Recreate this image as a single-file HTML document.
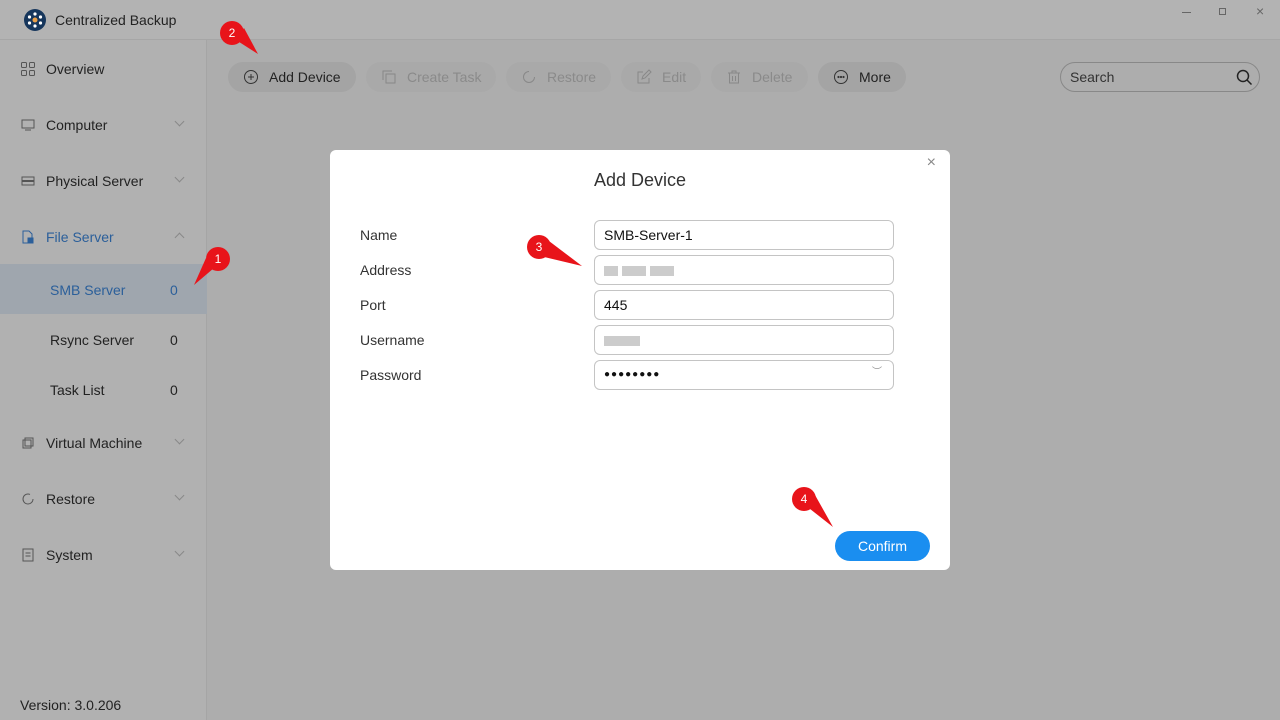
<!DOCTYPE html>
<html><head><meta charset="utf-8"><style>
*{box-sizing:border-box;margin:0;padding:0}
body{width:1280px;height:720px;overflow:hidden;font-family:"Liberation Sans",sans-serif;background:#adadad;position:relative;color:#222}
.top{position:absolute;left:0;top:0;width:1280px;height:40px;background:#b3b3b3;border-bottom:1px solid #a6a6a6}
.side{position:absolute;left:0;top:40px;width:207px;height:680px;background:#b1b1b1;border-right:1px solid #a5a5a5}
.nav{position:absolute;left:20px;font-size:14px;color:#222;display:flex;align-items:center}
.nav svg{margin-right:10px}
.chev{position:absolute;left:176px;width:7px;height:7px;border-right:1px solid #888;border-bottom:1px solid #888;transform:rotate(45deg)}
.sub{position:absolute;left:50px;font-size:14px;color:#222}
.cnt{position:absolute;left:170px;font-size:14px}
.btn{position:absolute;top:62px;height:30px;border-radius:15px;background:#a4a4a4;display:flex;align-items:center;padding-left:15px;font-size:14px;color:#222}
.btn.dis{background:#a9a9a9;color:#8a8a8a}
.btn svg{margin-right:10px}
.modal{position:absolute;left:330px;top:150px;width:620px;height:420px;background:#fff;border-radius:6px}
.lbl{position:absolute;left:30px;font-size:14px;color:#333}
.inp{position:absolute;left:264px;width:300px;height:30px;border:1px solid #c4c4c4;border-radius:6px;font-size:14px;padding-left:9px;line-height:28px;color:#111}
.blur{display:inline-block;height:10px;background:#ccc;vertical-align:middle;margin-right:4px}
.badge{position:absolute;width:24px;height:24px;border-radius:50%;background:#e8141a;color:#fff;font-size:12px;text-align:center;line-height:24px}
</style></head><body>
<div class="top">
<svg style="position:absolute;left:24px;top:9px" width="22" height="22" viewBox="0 0 22 22"><circle cx="11" cy="11" r="11" fill="#16365c"/><circle cx="11" cy="11" r="2.5" fill="#e9a04a"/><g fill="#fff"><circle cx="11" cy="5" r="1.6"/><circle cx="11" cy="17" r="1.6"/><circle cx="5.5" cy="8" r="1.6"/><circle cx="16.5" cy="8" r="1.6"/><circle cx="5.5" cy="14" r="1.6"/><circle cx="16.5" cy="14" r="1.6"/></g></svg>
<div style="position:absolute;left:55px;top:12px;font-size:14px;color:#222">Centralized Backup</div>
<div style="position:absolute;left:1182px;top:12px;width:9px;border-top:1px solid #666"></div>
<div style="position:absolute;left:1219px;top:8px;width:7px;height:7px;border:1px solid #666"></div>
<div style="position:absolute;left:1256px;top:3px;font-size:14px;color:#666">×</div>
</div>
<div class="side">
<div class="nav" style="top:21px"><svg width="16" height="16" viewBox="0 0 16 16" fill="none" stroke="#555"><rect x="1.5" y="1.5" width="5" height="5" rx="1"/><rect x="9.5" y="1.5" width="5" height="5" rx="1"/><rect x="1.5" y="9.5" width="5" height="5" rx="1"/><rect x="9.5" y="9.5" width="5" height="5" rx="1"/></svg>Overview</div>
<div class="nav" style="top:77px"><svg width="16" height="16" viewBox="0 0 16 16" fill="none" stroke="#555"><rect x="2" y="3" width="12" height="8"/><path d="M5 13h6"/></svg>Computer</div><div class="chev" style="top:78px"></div>
<div class="nav" style="top:133px"><svg width="16" height="16" viewBox="0 0 16 16" fill="none" stroke="#555"><rect x="2" y="4" width="12" height="3.5"/><rect x="2" y="8.5" width="12" height="3.5"/></svg>Physical Server</div><div class="chev" style="top:134px"></div>
<div class="nav" style="top:189px;color:#2b5f9a"><svg width="16" height="16" viewBox="0 0 16 16" fill="none" stroke="#2b5f9a"><path d="M3 2h6l3 3v9H3z"/><rect x="8" y="9" width="5" height="5" fill="#2b5f9a"/></svg>File Server</div><div class="chev" style="top:194px;transform:rotate(225deg)"></div>
<div style="position:absolute;left:0;top:224px;width:207px;height:50px;background:#9fa6ae"></div>
<div class="sub" style="top:242px;color:#2b5f9a">SMB Server</div><div class="cnt" style="top:242px;color:#2b5f9a">0</div>
<div class="sub" style="top:292px">Rsync Server</div><div class="cnt" style="top:292px">0</div>
<div class="sub" style="top:342px">Task List</div><div class="cnt" style="top:342px">0</div>
<div class="nav" style="top:395px"><svg width="16" height="16" viewBox="0 0 16 16" fill="none" stroke="#555"><rect x="5" y="3" width="8" height="8"/><rect x="3" y="5" width="8" height="8"/></svg>Virtual Machine</div><div class="chev" style="top:396px"></div>
<div class="nav" style="top:451px"><svg width="16" height="16" viewBox="0 0 16 16" fill="none" stroke="#555"><path d="M13 8a5 5 0 1 1-3-4.6"/></svg>Restore</div><div class="chev" style="top:452px"></div>
<div class="nav" style="top:507px"><svg width="16" height="16" viewBox="0 0 16 16" fill="none" stroke="#555"><path d="M3 2h10v12H3zM5.5 6h5M5.5 9h5"/></svg>System</div><div class="chev" style="top:508px"></div>
<div style="position:absolute;left:20px;top:657px;font-size:14px">Version: 3.0.206</div>
</div>
<div class="btn" style="left:228px;width:128px"><svg width="16" height="16" viewBox="0 0 16 16" fill="none" stroke="#333"><circle cx="8" cy="8" r="6.5"/><path d="M8 5v6M5 8h6"/></svg>Add Device</div>
<div class="btn dis" style="left:366px;width:130px"><svg width="16" height="16" viewBox="0 0 16 16" fill="none" stroke="#888"><rect x="5" y="5" width="9" height="9"/><path d="M2 11V2h9"/></svg>Create Task</div>
<div class="btn dis" style="left:506px;width:105px"><svg width="16" height="16" viewBox="0 0 16 16" fill="none" stroke="#888"><path d="M13.5 8A5.5 5.5 0 1 1 8 2.5"/></svg>Restore</div>
<div class="btn dis" style="left:621px;width:80px"><svg width="16" height="16" viewBox="0 0 16 16" fill="none" stroke="#888"><path d="M13 9v5H2V3h5M6 10l1-3 6-6 2 2-6 6z"/></svg>Edit</div>
<div class="btn dis" style="left:711px;width:97px"><svg width="16" height="16" viewBox="0 0 16 16" fill="none" stroke="#888"><path d="M2 4h12M6 4V2h4v2M3.5 4v10h9V4M6.5 7v5M9.5 7v5"/></svg>Delete</div>
<div class="btn" style="left:818px;width:88px"><svg width="16" height="16" viewBox="0 0 16 16" fill="none" stroke="#333"><circle cx="8" cy="8" r="6.5"/><circle cx="5.5" cy="8" r=".6"/><circle cx="8" cy="8" r=".6"/><circle cx="10.5" cy="8" r=".6"/></svg>More</div>
<div style="position:absolute;left:1060px;top:62px;width:200px;height:30px;border:1px solid #888;border-radius:15px;font-size:14px;color:#333;padding-left:9px;line-height:28px">Search
<svg style="position:absolute;right:6px;top:6px" width="17" height="17" viewBox="0 0 17 17" fill="none" stroke="#222" stroke-width="1.5"><circle cx="7" cy="7" r="5.5"/><path d="M11 11l4.5 4.5"/></svg></div>
<div class="modal">
<div style="position:absolute;right:14px;top:4px;color:#888;font-size:16px">×</div>
<div style="position:absolute;left:0;width:620px;top:20px;text-align:center;font-size:18px;color:#333">Add Device</div>
<div class="lbl" style="top:77px">Name</div><div class="inp" style="top:70px">SMB-Server-1</div>
<div class="lbl" style="top:112px">Address</div><div class="inp" style="top:105px"><span class="blur" style="width:14px"></span><span class="blur" style="width:24px"></span><span class="blur" style="width:24px"></span></div>
<div class="lbl" style="top:147px">Port</div><div class="inp" style="top:140px">445</div>
<div class="lbl" style="top:182px">Username</div><div class="inp" style="top:175px"><span class="blur" style="width:36px"></span></div>
<div class="lbl" style="top:217px">Password</div><div class="inp" style="top:210px;font-size:10px;letter-spacing:1px">●●●●●●●●<span style="position:absolute;right:10px;top:-2px;color:#999;font-size:10px">︶</span></div>
<div style="position:absolute;left:505px;top:381px;width:95px;height:30px;border-radius:15px;background:#1a8ef0;color:#fff;font-size:14px;text-align:center;line-height:30px">Confirm</div>
</div>
<div class="badge" style="left:220px;top:21px">2</div>
<svg style="position:absolute;left:0;top:0" width="1280" height="720"><path d="M236 40L258 54L244 28Z" fill="#e8141a"/><path d="M206 258L194 285L214 268Z" fill="#e8141a"/><path d="M540 256L582 266L545 238Z" fill="#e8141a"/><path d="M805 505L833 527L815 495Z" fill="#e8141a"/></svg>
<div class="badge" style="left:206px;top:247px">1</div>
<div class="badge" style="left:527px;top:235px">3</div>
<div class="badge" style="left:792px;top:487px">4</div>
</body></html>
